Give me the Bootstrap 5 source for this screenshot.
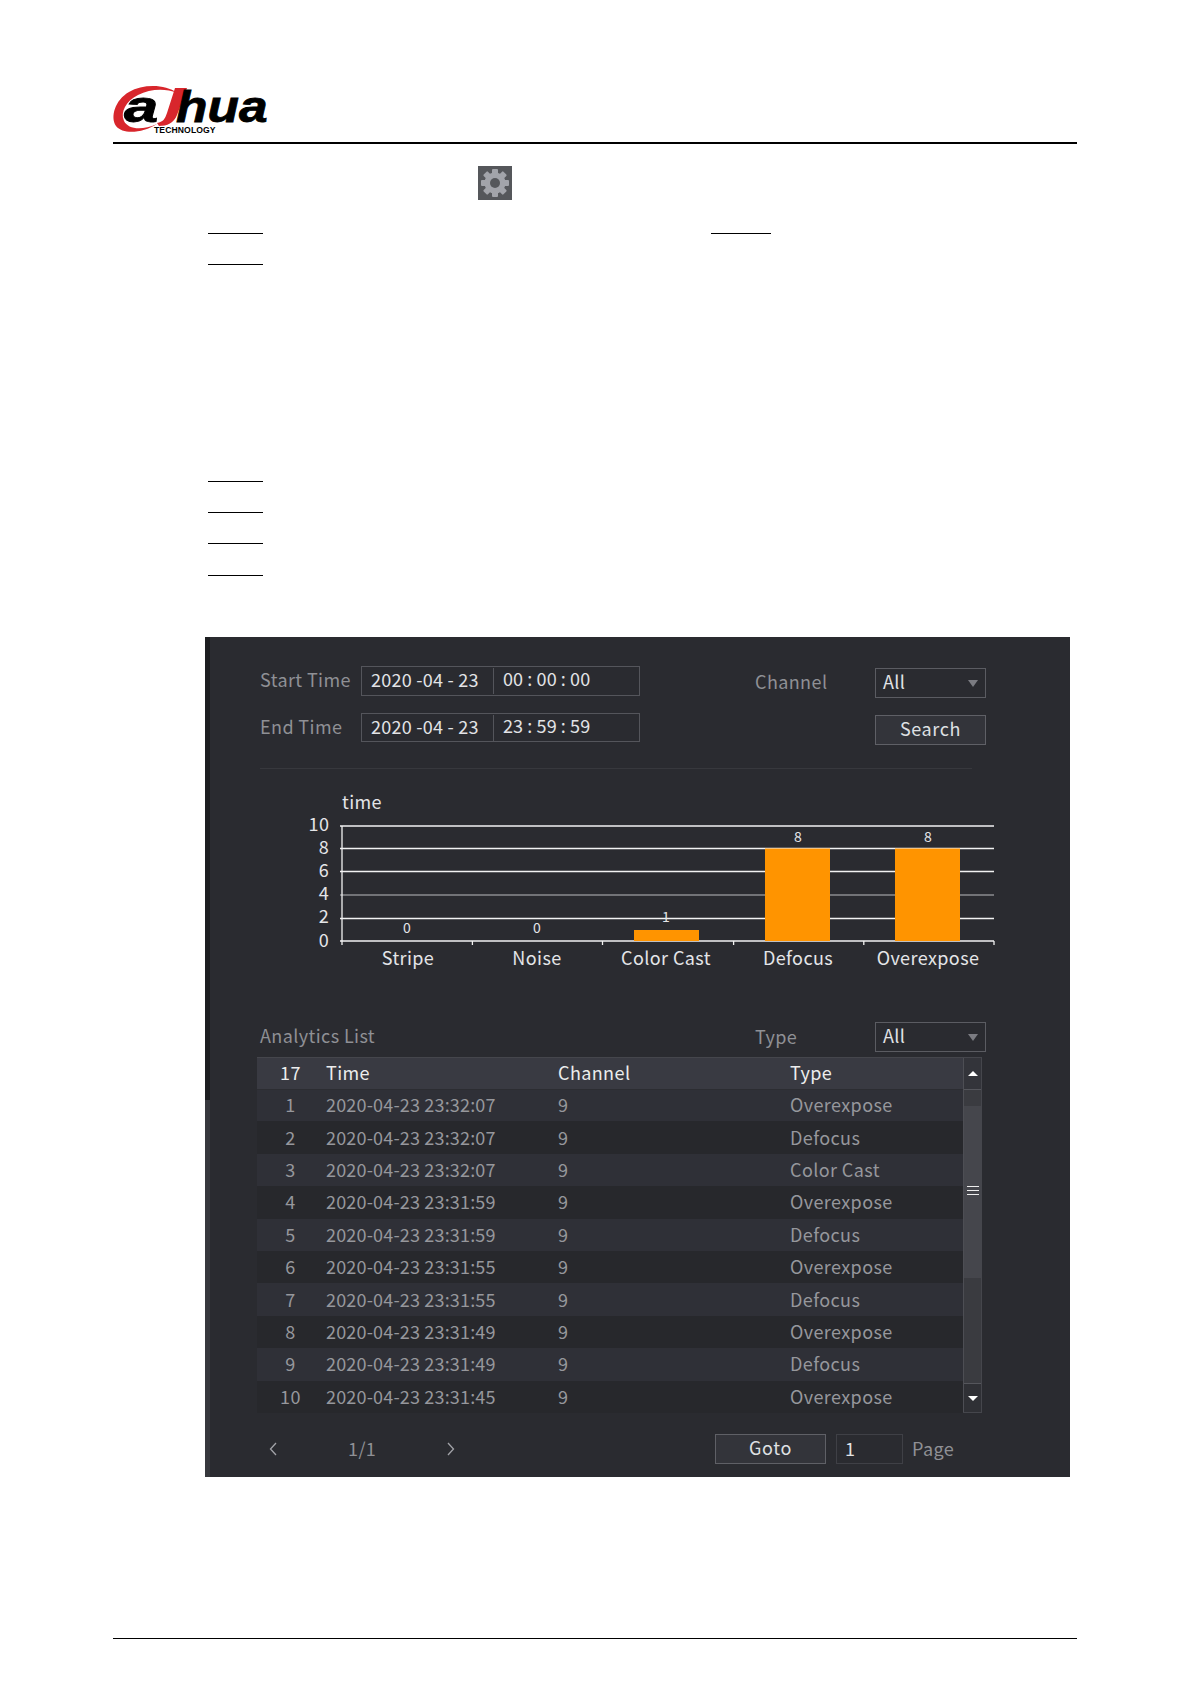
<!DOCTYPE html>
<html lang="en">
<head>
<meta charset="utf-8">
<title>Analytics List</title>
<link rel="stylesheet" href="https://cdn.jsdelivr.net/npm/bootstrap@5.3.0/dist/css/bootstrap.min.css">
<style>
body{background:#fff;margin:0;font-family:"Noto Sans CJK SC","Noto Sans",sans-serif;font-size:18px}
.sheet{width:1191px;height:1684px;overflow:hidden}
.brand-head{margin:0 114px 0 113px;padding-top:85px;height:144px;border-bottom:2px solid #000}
.brand-head svg{display:block;overflow:visible}
.gear-box{width:34px;height:34px;margin:22px 0 0 478px;background:#55575b;display:block}
.doc-rule{height:1px;background:#000;width:55px}
.rule-a{margin-top:33px}
.rule-first{margin-left:208px}
.rule-second{margin-left:448px;width:60px}
.rule-b{margin:30px 0 0 208px}
.rule-c{margin:216px 0 0 208px}
.rule-d{margin:30px 0 0 208px}
.rule-e{margin:30px 0 0 208px}
.rule-f{margin:31px 0 0 208px}
.dvr-panel{width:865px;height:840px;margin:61px 0 0 205px;background:#2a2b30;color:#8f9095;line-height:1;letter-spacing:.4px}
.panel-edge{width:5px;flex:none;background:linear-gradient(#1d1e21 0,#1d1e21 463px,#37383d 463px,#37383d 100%)}
.panel-body{padding:29px 0 0 47px;width:860px}
.form-line{height:30px;margin-left:3px}
.form-line+.form-line{margin-top:17px}
.field-name{width:101px;line-height:26px}
.field-name-b{width:120px;margin-left:115px;line-height:30px}
.date-box{width:279px;height:30px;border:1px solid #54555b;color:#e2e3e6;letter-spacing:.25px}
.date-box-low{height:29px}
.date-part{padding-left:9px;width:132px;height:26px;line-height:22px;border-right:1px solid #54555b;margin:1px 0;white-space:pre}
.time-part{padding-left:9px;white-space:pre;line-height:23px;letter-spacing:.1px}
.combo{width:111px;height:30px;border:1px solid #5b5c62;color:#e2e3e6;padding:0 7px 0 7px;margin-top:2px}
.combo span{padding-bottom:5px}
.combo i{width:0;height:0;border:5px solid transparent;border-top:7px solid #7b7c82;border-bottom:0}
.dvr-btn{height:30px;border:1px solid #5f6066;background:#33343a;color:#dfe0e3;border-radius:0;padding:0 0 5px;font-size:18px;line-height:1;letter-spacing:.6px;--bs-btn-hover-bg:#33343a}
.btn-search{width:111px;margin-top:2px}
.sep-line{height:1px;width:712px;margin:25px 0 0 3px;background:#37383d}
.chart-svg{display:block;margin:11px 0 0 -47px;width:860px;height:210px}
.chart-svg text{font-family:"Noto Sans CJK SC","Noto Sans",sans-serif;fill:#e4e5e8;text-anchor:middle}
.list-head{height:28px;margin:33px 0 0 3px}
.list-head .combo{margin:0}
.list-head .field-name-b{margin-left:0;line-height:22px;margin-top:-2px}
.list-title{width:495px;padding-bottom:5px}
.grid-wrap{width:725px;height:356px;margin-top:6px;border:1px solid #45464c;border-left:0}
.result-table{--bs-table-bg:transparent;--bs-table-color:#96979c;table-layout:fixed;width:706px;flex:none;margin:0;font-size:18px}
.result-table th,.result-table td{padding:0 0 2px;height:32.4px;vertical-align:middle;font-weight:400;border:0;box-shadow:none;line-height:1}
.result-table th{height:31px;color:#eceded;background:#393a42;border-bottom:1px solid #2c2d32}
.result-table tbody tr:nth-child(odd) td{background:#2f3037}
.result-table tbody tr:nth-child(even) td{background:#27282c}
.result-table .stamp-cell{letter-spacing:.17px}
.result-table .num-cell{text-align:center;padding-right:2px}
.scroll-col{width:18px;flex:none;border-left:1px solid #4d4e54;background:#3a3b40}
.scroll-btn{height:32px;border-bottom:1px solid #55565c;background:#33343a}
.scroll-btn-low{height:29px;border-top:1px solid #55565c;border-bottom:0;margin-top:auto;background:#2f3035}
.scroll-thumb{height:172px;margin-top:16px;background:#45464c}
.tri-up{width:0;height:0;border:5px solid transparent;border-bottom:5px solid #fff;border-top:0}
.tri-down{width:0;height:0;border:5px solid transparent;border-top:5px solid #fff;border-bottom:0}
.grip{width:12px;height:9px;border-top:1px solid #eee;border-bottom:1px solid #eee;position:relative;margin-top:-3px}
.grip::after{content:"";position:absolute;left:0;right:0;top:3px;height:1px;background:#eee}
.pager{height:29px;margin:21px 0 0 3px}
.pager svg{display:block}
.pg-prev{margin-left:9px}
.pg-count{width:27px;margin-left:71px;text-align:center;padding-bottom:2px;white-space:nowrap}
.pg-next{margin-left:72px}
.btn-goto{width:111px;margin-left:260px;height:30px;padding-bottom:3px}
.pg-input{width:67px;height:30px;border:1px solid #3f4046;color:#e2e3e6;padding:0 8px 2px;margin-left:10px}
.pg-label{margin-left:9px;padding-bottom:2px}
.foot-rule{height:1px;background:#000;margin:161px 114px 0 113px}
</style>
</head>
<body>
<div class="sheet">
  <header class="brand-head">
    <svg width="165" height="52" viewBox="0 0 165 52" role="img" aria-label="alhua logo">
      <path fill="#d8262c" d="M64 8C52-1 30-1 16 7C2 15-3 32 3 41C10 50 30 48 44 39C28 46 15 44 11 36C7 27 13 16 25 10C37 4 52 3 64 8Z"/>
      <text transform="translate(11 37) scale(1.4 1)" font-family="Liberation Sans" font-weight="700" font-style="italic" font-size="44" stroke="#000" stroke-width=".8">a</text>
      <path fill="#d8262c" d="M62 3H74L64 30C61 38 54 41 46 41L44 38C50 37 52 34 54 28Z"/>
      <text transform="translate(63 37) scale(1.17 1)" font-family="Liberation Sans" font-weight="700" font-style="italic" font-size="44" stroke="#000" stroke-width=".8">hua</text>
      <text x="41" y="48" font-family="Liberation Sans" font-weight="700" font-size="8.6" letter-spacing=".1">TECHNOLOGY</text>
    </svg>
  </header>
  <svg class="gear-box" viewBox="0 0 34 34" aria-hidden="true">
    <g fill="#a2a4aa">
      <circle cx="17" cy="17" r="10.5"/>
      <rect x="14" y="3" width="6" height="28" rx="1"/>
      <rect x="14" y="3" width="6" height="28" rx="1" transform="rotate(45 17 17)"/>
      <rect x="14" y="3" width="6" height="28" rx="1" transform="rotate(90 17 17)"/>
      <rect x="14" y="3" width="6" height="28" rx="1" transform="rotate(135 17 17)"/>
    </g>
    <circle cx="17" cy="17" r="5" fill="#55575b"/>
  </svg>
  <div class="d-flex rule-a"><div class="doc-rule rule-first"></div><div class="doc-rule rule-second"></div></div>
  <div class="doc-rule rule-b"></div>
  <div class="doc-rule rule-c"></div>
  <div class="doc-rule rule-d"></div>
  <div class="doc-rule rule-e"></div>
  <div class="doc-rule rule-f"></div>

  <section class="dvr-panel d-flex">
    <div class="panel-edge"></div>
    <div class="panel-body">
      <div class="form-line d-flex align-items-start">
        <div class="field-name">Start Time</div>
        <div class="date-box d-flex"><div class="date-part">2020 -04 - 23</div><div class="time-part">00 : 00 : 00</div></div>
        <div class="field-name-b">Channel</div>
        <div class="combo d-flex align-items-center justify-content-between"><span>All</span><i></i></div>
      </div>
      <div class="form-line d-flex align-items-start">
        <div class="field-name">End Time</div>
        <div class="date-box date-box-low d-flex"><div class="date-part">2020 -04 - 23</div><div class="time-part">23 : 59 : 59</div></div>
        <div class="field-name-b"></div>
        <button type="button" class="btn dvr-btn btn-search">Search</button>
      </div>
      <div class="sep-line"></div>

      <svg class="chart-svg" viewBox="210 780 860 210" role="img" aria-label="time per analytics type">
        <g stroke="#f2f2f2" stroke-width="1.3">
          <path d="M340 826H994M340 848.5H994M340 871.5H994M340 918.5H994M340 941H994"/>
          <path stroke="#8b8c8f" d="M340 895H994"/>
          <path d="M342 826V945M472.4 941V945M602.5 941V945M733.6 941V945M863.8 941V945M994 941V945"/>
        </g>
        <g fill="#ff9400">
          <rect x="634" y="930" width="65" height="11"/>
          <rect x="765" y="848.5" width="65" height="92.5"/>
          <rect x="895" y="848.5" width="65" height="92.5"/>
        </g>
        <text x="362" y="809" font-size="18">time</text>
        <g font-size="18">
          <text x="319" y="831">10</text><text x="324" y="854">8</text><text x="324" y="877">6</text>
          <text x="324" y="900">4</text><text x="324" y="923">2</text><text x="324" y="947">0</text>
          <text x="408" y="965">Stripe</text><text x="537" y="965">Noise</text><text x="666" y="965">Color Cast</text>
          <text x="798" y="965">Defocus</text><text x="928" y="965">Overexpose</text>
        </g>
        <g font-size="14">
          <text x="407" y="933">0</text><text x="537" y="933">0</text><text x="666" y="922">1</text>
          <text x="798" y="842">8</text><text x="928" y="842">8</text>
        </g>
      </svg>

      <div class="list-head d-flex align-items-center">
        <div class="list-title">Analytics List</div>
        <div class="field-name-b">Type</div>
        <div class="combo d-flex align-items-center justify-content-between"><span>All</span><i></i></div>
      </div>

      <div class="grid-wrap d-flex">
        <table class="table result-table">
          <colgroup><col style="width:69px"><col style="width:232px"><col style="width:232px"><col style="width:173px"></colgroup>
          <thead><tr><th class="num-cell">17</th><th>Time</th><th>Channel</th><th>Type</th></tr></thead>
          <tbody>
            <tr><td class="num-cell">1</td><td class="stamp-cell">2020-04-23 23:32:07</td><td>9</td><td>Overexpose</td></tr>
            <tr><td class="num-cell">2</td><td class="stamp-cell">2020-04-23 23:32:07</td><td>9</td><td>Defocus</td></tr>
            <tr><td class="num-cell">3</td><td class="stamp-cell">2020-04-23 23:32:07</td><td>9</td><td>Color Cast</td></tr>
            <tr><td class="num-cell">4</td><td class="stamp-cell">2020-04-23 23:31:59</td><td>9</td><td>Overexpose</td></tr>
            <tr><td class="num-cell">5</td><td class="stamp-cell">2020-04-23 23:31:59</td><td>9</td><td>Defocus</td></tr>
            <tr><td class="num-cell">6</td><td class="stamp-cell">2020-04-23 23:31:55</td><td>9</td><td>Overexpose</td></tr>
            <tr><td class="num-cell">7</td><td class="stamp-cell">2020-04-23 23:31:55</td><td>9</td><td>Defocus</td></tr>
            <tr><td class="num-cell">8</td><td class="stamp-cell">2020-04-23 23:31:49</td><td>9</td><td>Overexpose</td></tr>
            <tr><td class="num-cell">9</td><td class="stamp-cell">2020-04-23 23:31:49</td><td>9</td><td>Defocus</td></tr>
            <tr><td class="num-cell">10</td><td class="stamp-cell">2020-04-23 23:31:45</td><td>9</td><td>Overexpose</td></tr>
          </tbody>
        </table>
        <div class="scroll-col d-flex flex-column">
          <div class="scroll-btn d-flex align-items-center justify-content-center"><div class="tri-up"></div></div>
          <div class="scroll-thumb d-flex align-items-center justify-content-center"><div class="grip"></div></div>
          <div class="scroll-btn scroll-btn-low d-flex align-items-center justify-content-center"><div class="tri-down"></div></div>
        </div>
      </div>

      <div class="pager d-flex align-items-center">
        <svg class="pg-prev" width="8" height="14" viewBox="0 0 8 14"><path d="M7 1L1.5 7L7 13" fill="none" stroke="#a2a3a8" stroke-width="1.3"/></svg>
        <div class="pg-count">1/1</div>
        <svg class="pg-next" width="8" height="14" viewBox="0 0 8 14"><path d="M1 1L6.5 7L1 13" fill="none" stroke="#a2a3a8" stroke-width="1.3"/></svg>
        <button type="button" class="btn dvr-btn btn-goto">Goto</button>
        <div class="pg-input d-flex align-items-center">1</div>
        <div class="pg-label">Page</div>
      </div>
    </div>
  </section>
  <div class="foot-rule"></div>
</div>
<script src="https://cdn.jsdelivr.net/npm/bootstrap@5.3.0/dist/js/bootstrap.bundle.min.js"></script>
</body>
</html>
